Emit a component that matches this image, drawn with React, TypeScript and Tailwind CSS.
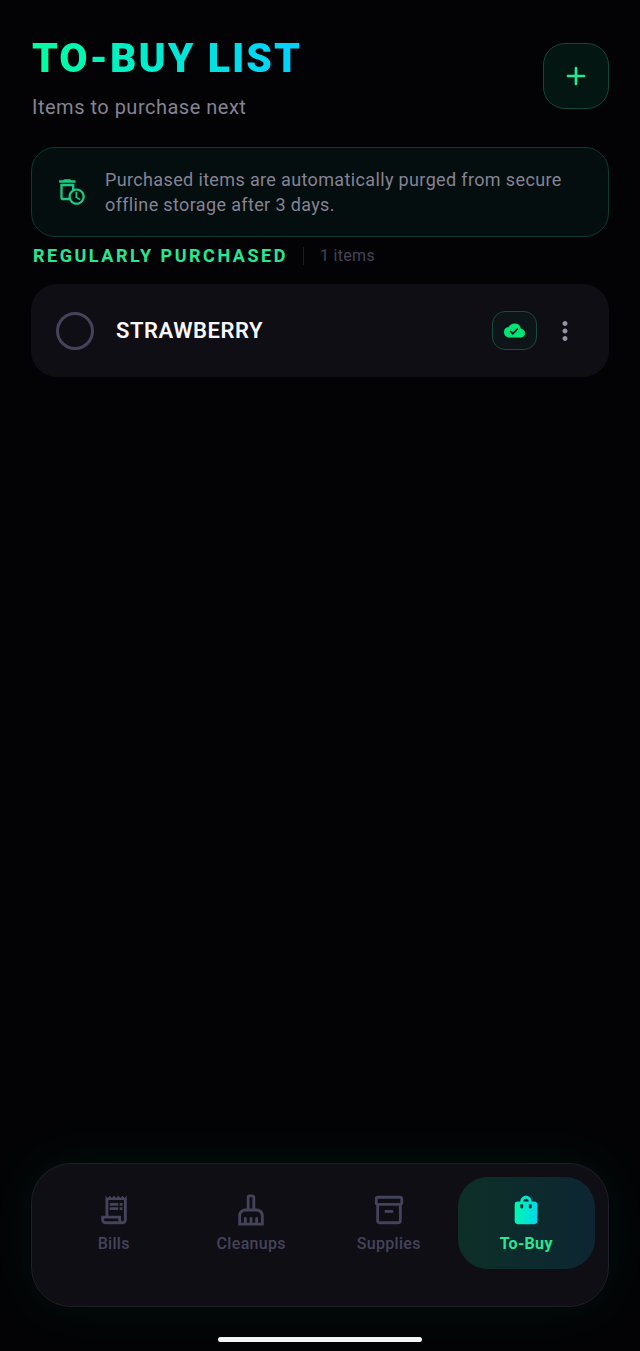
import { useState } from "react"
import type { ReactNode } from "react"
import { clsx } from "clsx"
import {
  MdCloudDone,
  MdMoreVert,
  MdOutlineAutoDelete,
  MdOutlineCleaningServices,
  MdOutlineInventory2,
  MdOutlineReceiptLong,
} from "react-icons/md"

interface Item {
  id: number
  name: string
  synced: boolean
}

const items: Item[] = [{ id: 1, name: "STRAWBERRY", synced: true }]

function PlusIcon() {
  return (
    <svg viewBox="0 0 24 24" className="size-8 fill-[#26e894]" aria-hidden="true">
      <path d="M18 13h-5v5c0 .55-.45 1-1 1s-1-.45-1-1v-5H6c-.55 0-1-.45-1-1s.45-1 1-1h5V6c0-.55.45-1 1-1s1 .45 1 1v5h5c.55 0 1 .45 1 1s-.45 1-1 1z" />
    </svg>
  )
}

function BagIcon() {
  return (
    <svg viewBox="0 0 24 24" className="size-[34px]" aria-hidden="true">
      <defs>
        <linearGradient id="bag" x1="0" y1="0" x2="24" y2="0" gradientUnits="userSpaceOnUse">
          <stop offset="0" stopColor="#00ff9d" />
          <stop offset="1" stopColor="#00d0ff" />
        </linearGradient>
      </defs>
      <path
        fill="url(#bag)"
        d="M18 6h-2c0-2.21-1.79-4-4-4S8 3.79 8 6H6c-1.1 0-2 .9-2 2v12c0 1.1.9 2 2 2h12c1.1 0 2-.9 2-2V8c0-1.1-.9-2-2-2zm-8 4c0 .55-.45 1-1 1s-1-.45-1-1V8h2v2zm2-6c1.1 0 2 .9 2 2h-4c0-1.1.9-2 2-2zm4 6c0 .55-.45 1-1 1s-1-.45-1-1V8h2v2z"
      />
    </svg>
  )
}

function Header() {
  return (
    <header className="flex items-center justify-between">
      <div className="flex flex-col gap-[13px] pt-px pl-px">
        <h1 className="w-fit bg-linear-to-r from-[#00ff9d] to-[#00d0ff] bg-clip-text text-[41px] leading-[48px] font-black tracking-[2px] text-transparent">
          TO-BUY LIST
        </h1>
        <p className="text-xl leading-6 tracking-wide text-[#858394]">Items to purchase next</p>
      </div>
      <button
        type="button"
        aria-label="Add item"
        className="flex size-[66px] items-center justify-center rounded-[22px] border border-[#114737] bg-[#041611]"
      >
        <PlusIcon />
      </button>
    </header>
  )
}

function PurgeNotice() {
  return (
    <div className="mt-7 flex items-center gap-[19px] rounded-3xl border border-[#0d3a2e] bg-[#040e0e] py-[19px] pr-6 pl-[26px]">
      <MdOutlineAutoDelete size={28} className="shrink-0 text-[#1cc883]" />
      <p className="text-lg leading-[25px] tracking-[0.02em] text-[#858394]">
        Purchased items are automatically purged from secure offline storage after 3 days.
      </p>
    </div>
  )
}

function ItemCard({ item }: { item: Item }) {
  const [checked, setChecked] = useState(false)

  return (
    <li className="flex items-center rounded-[26px] bg-[#0f0e14] py-[27px] pr-[29px] pl-[25px]">
      <label className="flex grow items-center gap-[22px]">
        <input
          type="checkbox"
          checked={checked}
          onChange={(e) => setChecked(e.target.checked)}
          className="size-[38px] shrink-0 appearance-none rounded-full border-3 border-[#45435a] checked:bg-[#26e894]"
        />
        <span className="text-[22px] leading-7 font-semibold tracking-wide text-[#f8f8fc]">{item.name}</span>
      </label>
      {item.synced && (
        <span className="flex h-[39px] w-[45px] items-center justify-center rounded-[13px] border border-[#174d3d] bg-[#0d1518]">
          <MdCloudDone size={21} className="text-[#00e676]" />
        </span>
      )}
      <button type="button" aria-label="Item options" className="ml-[13px] text-[#9391a2]">
        <MdMoreVert size={30} />
      </button>
    </li>
  )
}

function NavItem({ label, icon, active }: { label: string; icon: ReactNode; active?: boolean }) {
  return (
    <a
      href="#"
      aria-current={active ? "page" : undefined}
      className={clsx(
        "flex flex-1 flex-col items-center gap-[7px] rounded-[30px] pt-4 pb-[15px] text-base leading-5 tracking-[0.02em]",
        active
          ? "bg-linear-to-r from-[#0d2f27] to-[#0d2632] font-bold text-[#26e894]"
          : "font-medium text-[#45435a]"
      )}
    >
      {icon}
      {label}
    </a>
  )
}

export default function App() {
  return (
    <div className="flex min-h-screen flex-col bg-[#030305] px-[31px] pt-[33px] font-[Roboto,sans-serif]">
      <Header />
      <main className="grow">
        <PurgeNotice />
        <section>
          <div className="flex items-center px-0.5 py-[9px]">
            <h2 className="text-lg leading-5 font-bold tracking-[0.14em] text-[#26e894]">REGULARLY PURCHASED</h2>
            <span className="ml-[15px] h-[18px] w-px bg-[#1c1b24]" />
            <span className="ml-4 text-base leading-5 tracking-[0.02em] text-[#45435a]">{items.length} items</span>
          </div>
          <ul className="mt-[9px] flex flex-col gap-3">
            {items.map((item) => (
              <ItemCard key={item.id} item={item} />
            ))}
          </ul>
        </section>
      </main>

      {/* Bottom navigation */}
      <nav className="flex rounded-[40px] border border-[#1f1e2a] bg-[#0f0e14] px-[13px] pt-[13px] pb-[37px] shadow-[0_0_60px_rgba(0,255,157,0.06)]">
        <NavItem label="Bills" icon={<MdOutlineReceiptLong size={34} />} />
        <NavItem label="Cleanups" icon={<MdOutlineCleaningServices size={34} />} />
        <NavItem label="Supplies" icon={<MdOutlineInventory2 size={34} />} />
        <NavItem label="To-Buy" icon={<BagIcon />} active />
      </nav>
      <div className="mx-auto mt-[30px] mb-[9px] h-[5px] w-[204px] rounded-full bg-[#f4f4f4]" />
    </div>
  )
}
